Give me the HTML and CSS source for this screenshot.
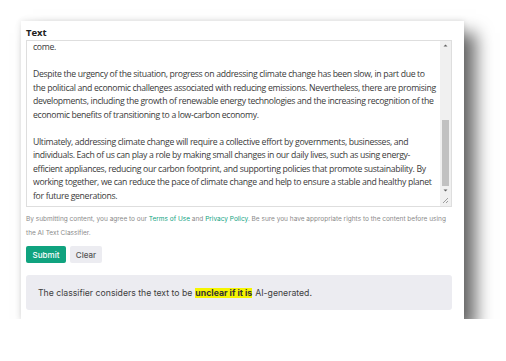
FILE: index.html
```html
<!DOCTYPE html>
<html lang="en">
<head>
  <meta charset="UTF-8">
  <title>AI Text Classifier</title>
  <link rel="stylesheet" href="styles.css">
</head>
<body>
  <div class="card">
    <div class="label">Text</div>

    <div class="textbox">
      <div class="textbox-content">
        come.<br>
        <br>
        Despite the urgency of the situation, progress on addressing climate change has been slow, in part due to<br>
        the political and economic challenges associated with reducing emissions. Nevertheless, there are promising<br>
        developments, including the growth of renewable energy technologies and the increasing recognition of the<br>
        economic benefits of transitioning to a low-carbon economy.<br>
        <br>
        Ultimately, addressing climate change will require a collective effort by governments, businesses, and<br>
        individuals. Each of us can play a role by making small changes in our daily lives, such as using energy-<br>
        efficient appliances, reducing our carbon footprint, and supporting policies that promote sustainability. By<br>
        working together, we can reduce the pace of climate change and help to ensure a stable and healthy planet<br>
        for future generations.
      </div>
      <div class="scrollbar">
        <svg class="arrow" width="9" height="9" viewBox="0 0 9 9">
          <path d="M2.5 5.5 L4.5 3.5 L6.5 5.5 Z" fill="#606060"/>
        </svg>
        <div class="track">
          <div class="thumb"></div>
        </div>
        <svg class="arrow" width="9" height="9" viewBox="0 0 9 9">
          <path d="M2.5 3.5 L4.5 5.5 L6.5 3.5 Z" fill="#606060"/>
        </svg>
        <span class="grip">
          <svg width="7" height="7" viewBox="0 0 7 7">
            <path d="M6 1 L1 6 M6 4 L4 6" stroke="#888" stroke-width="0.8" fill="none"/>
          </svg>
        </span>
      </div>
    </div>

    <p class="terms">
      By submitting content, you agree to our <a href="#">Terms of Use</a> and <a href="#">Privacy Policy</a>. Be sure you have appropriate rights to the content before using<br>
      the AI Text Classifier.
    </p>

    <div class="actions">
      <button class="btn btn-submit">Submit</button>
      <button class="btn btn-clear">Clear</button>
    </div>

    <div class="result">
      The classifier considers the text to be <mark>unclear if it is</mark> AI-generated.
    </div>
  </div>
</body>
</html>
```

FILE: styles.css
```css
* {
  margin: 0;
  padding: 0;
  box-sizing: border-box;
}

body {
  background: #fff;
  padding: 21px 0 0 21px;
  font-family: 'Inter', 'Liberation Sans', sans-serif;
}

.card {
  width: 443px;
  height: 298px;
  background: #fff;
  padding: 5px 12px 0 5px;
  box-shadow:
    12px 12px 16px rgba(0, 0, 0, 0.58),
    0 0 6px rgba(0, 0, 0, 0.12);
}

.label {
  font-family: 'Open Sans', sans-serif;
  font-weight: 700;
  font-size: 9.5px;
  line-height: 14px;
  color: #222;
}

.textbox {
  display: flex;
  height: 167px;
  border: 1px solid #dedede;
  overflow: hidden;
}

.textbox-content {
  flex: 1;
  padding: 0 0 0 6px;
  font-family: 'Open Sans', sans-serif;
  font-size: 8.7px;
  letter-spacing: -0.33px;
  line-height: 13.55px;
  color: #3a3a3a;
  white-space: nowrap;
}

.scrollbar {
  width: 11px;
  display: flex;
  flex-direction: column;
  align-items: center;
  background: #f0f0f0;
}

.arrow {
  display: block;
  flex-shrink: 0;
}

.track {
  flex: 1;
  width: 100%;
  display: flex;
  flex-direction: column;
  justify-content: flex-end;
  padding: 0 2px;
}

.thumb {
  height: 66px;
  background: #c1c1c1;
}

.grip {
  height: 11px;
  display: flex;
  align-items: center;
  justify-content: center;
}

.terms {
  margin-top: 5px;
  font-size: 6.5px;
  line-height: 14px;
  color: #8a8a8a;
  white-space: nowrap;
}

.terms a {
  color: #10a37f;
  text-decoration: none;
}

.actions {
  display: flex;
  gap: 4px;
  margin-top: 6px;
}

.btn {
  border: none;
  border-radius: 2px;
  height: 17px;
  font-family: 'Inter', sans-serif;
  font-size: 8px;
  font-weight: 500;
}

.btn-submit {
  width: 40px;
  background: #10a37f;
  color: #fff;
}

.btn-clear {
  width: 32px;
  background: #ececf1;
  color: #555;
}

.result {
  margin-top: 12px;
  height: 35px;
  display: flex;
  align-items: center;
  padding-left: 12px;
  background: #ececf1;
  border-radius: 3px;
  font-size: 8.7px;
  color: #404040;
}

.result mark {
  background: #f5f500;
  color: #333;
  font-weight: 700;
  margin: 0 3px;
}
```
